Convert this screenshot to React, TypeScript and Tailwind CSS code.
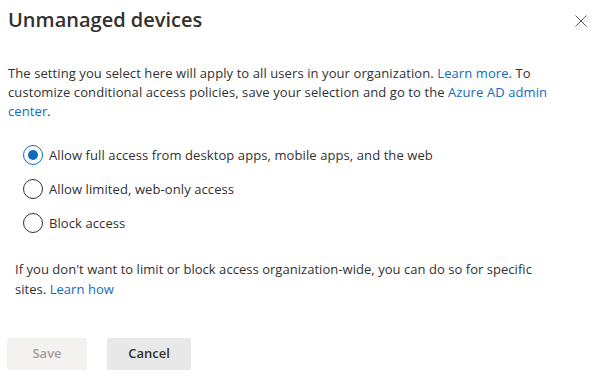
import React from "react";

export default function App() {
  const options = [
    { label: "Allow full access from desktop apps, mobile apps, and the web", checked: true },
    { label: "Allow limited, web-only access", checked: false },
    { label: "Block access", checked: false },
  ];
  return (
    <div
      className="w-[592px] h-[387px] bg-white text-[#323130] overflow-hidden"
      style={{ fontFamily: '"Open Sans", "Noto Sans", sans-serif' }}
    >
      <div className="flex items-start justify-between pt-[6px] pl-[8px] pr-[5px]">
        <h1 className="text-[20px] leading-[28px] font-semibold">Unmanaged devices</h1>
        <button className="mt-[9px] w-[12px] h-[12px] text-[#605e5c]" aria-label="Close">
          <svg width="12" height="12" viewBox="0 0 12 12" fill="none" stroke="currentColor" strokeWidth="1">
            <path d="M0.5 0.5 L11.5 11.5 M11.5 0.5 L0.5 11.5" />
          </svg>
        </button>
      </div>

      <p className="mt-[30px] pl-[8px] text-[13px] leading-[19px] tracking-[0.09px] whitespace-nowrap">
        The setting you select here will apply to all users in your organization.{" "}
        <a className="text-[#0f6cbd]">Learn more</a>. To
        <br />
        customize conditional access policies, save your selection and go to the{" "}
        <a className="text-[#0f6cbd]">Azure AD admin</a>
        <br />
        <a className="text-[#0f6cbd]">center</a>.
      </p>

      <div className="mt-[24px] pl-[23px] flex flex-col gap-[14px]">
        {options.map((o) => (
          <div key={o.label} className="flex items-center h-[20px] gap-[6px]">
            <span
              className={
                "w-[20px] h-[20px] rounded-full border flex items-center justify-center box-border " +
                (o.checked ? "border-[#0f6cbd]" : "border-[#323130]")
              }
            >
              {o.checked && <span className="w-[10px] h-[10px] rounded-full bg-[#0f6cbd]" />}
            </span>
            <span className="text-[13px] leading-[20px] tracking-[0.09px]">{o.label}</span>
          </div>
        ))}
      </div>

      <p className="mt-[26px] pl-[15px] text-[13px] leading-[20px] tracking-[0.04px] whitespace-nowrap">
        If you don't want to limit or block access organization-wide, you can do so for specific
        <br />
        sites. <a className="text-[#0f6cbd]">Learn how</a>
      </p>

      <div className="mt-[39px] pl-[7px] flex gap-[20px]">
        <button className="w-[80px] h-[32px] rounded-[2px] bg-[#f3f2f1] text-[#a19f9d] text-[13px] font-semibold">
          Save
        </button>
        <button className="w-[84px] h-[32px] rounded-[2px] bg-[#e8e8e8] text-[#323130] text-[13px] font-semibold">
          Cancel
        </button>
      </div>
    </div>
  );
}
